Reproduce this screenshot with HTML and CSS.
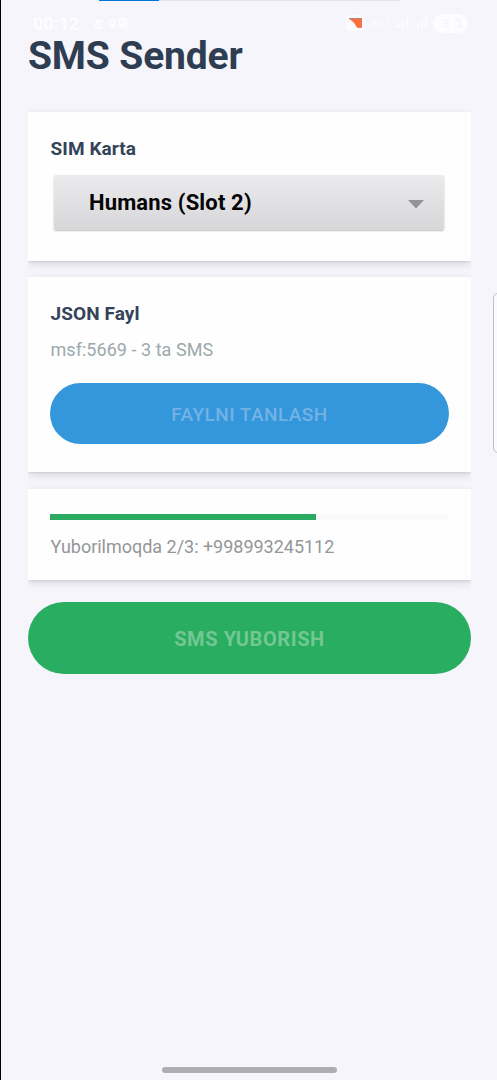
FILE: index.html
```html
<!DOCTYPE html>
<html lang="uz">
<head>
<meta charset="utf-8">
<title>SMS Sender</title>
<link rel="stylesheet" href="styles.css">
</head>
<body>
<div class="screen">
  <div class="load"><span class="load-fill"></span></div>
  <header class="status">
    <span class="clock">00:12</span>
    <svg class="notices" width="38" height="16" viewBox="0 0 38 16" fill="none" stroke="#fdfdff" stroke-width="1.8"><path d="M4 5h8M3 12l4-6 4 6M5 12h6M19 4h5v5h-5zM19 13l5-4M28 3h5v6h-5zM28 13l5-3M35.500 2v12"/></svg>
    <svg class="signals" width="124" height="20" viewBox="0 0 124 20">
      <rect x="0" y="1" width="18" height="16" rx="4" fill="#fcfbfe"/>
      <path d="M2.500 4.500h13.500v8q0 1.500-1.500 1.500h-2q-1.500 0-2.500-2-2.500-5-7.500-7.500z" fill="#f8713f"/>
      <path d="M3 4.500h13" stroke="#b08478" stroke-width="1"/>
      <path d="M26 6v7M30 6v7M26 9h4M34 6h5M34 6v6h5M42 5v4" stroke="#fcfcff" stroke-width="1.500" fill="none"/>
      <path d="M49 14v-2M53 14v-5M57 14V6M61 14V3M68 14v-2M72 14v-5M76 14V6M80 14V3" stroke="#fcfcff" stroke-width="2.500"/>
      <rect x="87" y="0" width="35" height="19" rx="9.500" fill="#fdfdff"/>
      <path d="M97 6h6M97 9.500h5M97 13h6M108 6h6v7h-6" stroke="#f6f6fc" stroke-width="1.500" fill="none"/>
    </svg>
  </header>
  <main class="content">
    <h1 class="title">SMS Sender</h1>
    <section class="card card-sim">
      <h2 class="label">SIM Karta</h2>
      <div class="select"><span class="select-text">Humans (Slot 2)</span>
        <svg class="select-arrow" width="16" height="9" viewBox="0 0 16 9"><path d="M0 0h16L8 8.500z" fill="#939297"/></svg>
      </div>
    </section>
    <section class="card card-file">
      <h2 class="label">JSON Fayl</h2>
      <p class="file-info">msf:5669 - 3 ta SMS</p>
      <button class="btn btn-file"><span>FAYLNI TANLASH</span></button>
    </section>
    <section class="card card-progress">
      <div class="track"><div class="track-fill"></div></div>
      <p class="progress-text">Yuborilmoqda 2/3: +998993245112</p>
    </section>
    <button class="btn btn-send"><span>SMS YUBORISH</span></button>
  </main>
  <div class="home-bar"></div>
  <div class="edge-handle"></div>
</div>
</body>
</html>
```
FILE: styles.css
```css
* { box-sizing: border-box; }
body { margin: 0; font-family: Roboto, "Liberation Sans", sans-serif; }
h1, h2, p { margin: 0; font-weight: 400; white-space: nowrap; }
.screen {
  position: relative;
  display: flex;
  flex-direction: column;
  width: 497px;
  height: 1080px;
  overflow: hidden;
  border-left: 1px solid #000;
  background: #f5f5fb;
}
.load { height: 1px; margin: 0 97px 0 98px; background: #e4e4e8; }
.load-fill { display: block; width: 60px; height: 1px; background: #0078d7; }
.status {
  display: flex;
  align-items: center;
  height: 31px;
  padding: 14px 27px 0 32px;
  color: #fdfdff;
}
.clock { width: 58px; font-size: 18px; font-weight: 700; }
.signals { margin-left: auto; }
.content { display: flex; flex-direction: column; flex: 1; padding: 0 26px 0 27px; }
.title {
  height: 80px;
  font-size: 39px;
  line-height: 48px;
  font-weight: 700;
  letter-spacing: -0.15px;
  color: #2e3d52;
}
.card {
  padding: 0 22px;
  background: #fefefe;
  box-shadow: 0 3px 8px rgba(40, 40, 60, .14), 0 1px 2px rgba(40, 40, 60, .1);
  clip-path: inset(-5px 0 -12px 0);
}
.card-sim { height: 149px; padding-top: 26px; margin-bottom: 16px; }
.card-file { height: 195px; padding-top: 26px; margin-bottom: 17px; }
.card-progress { height: 91px; padding-top: 25px; margin-bottom: 22px; }
.label { padding-left: 0.5px; font-size: 19px; line-height: 22px; font-weight: 700; letter-spacing: 0.08px; color: #34435a; }
.select {
  display: flex;
  align-items: center;
  justify-content: space-between;
  height: 55px;
  margin: 15px 5px 0 4px;
  padding: 0 20px 0 35px;
  border-radius: 2px;
  background: linear-gradient(#ebebed, #d7d6d9);
  box-shadow: 0 1px 2px rgba(0, 0, 0, .25);
}
.select-text { font-size: 22px; font-weight: 700; letter-spacing: 0.15px; color: #050505; }
.select-arrow { margin-top: 3px; }
.file-info { margin-top: 14px; padding-left: 0.5px; font-size: 18px; line-height: 22px; letter-spacing: 0.04px; color: #9da8aa; }
.btn {
  display: flex;
  align-items: center;
  justify-content: center;
  padding: 2px 0 0;
  border: 0;
  border-radius: 36px;
  font-family: inherit;
  font-weight: 700;
}
.btn-file { width: 399px; height: 61px; margin-top: 22px; background: #3497dc; color: #73b2e4; font-size: 19px; font-weight: 500; letter-spacing: 0.45px; }
.btn-send { width: 443px; height: 72px; flex: none; background: #28ad61; color: #73c793; font-size: 20px; letter-spacing: 0.6px; }
.track { width: 398px; height: 6px; background: #fafafc; }
.track-fill { width: 66.8%; height: 6px; background: #2bab62; }
.progress-text { margin-top: 16px; padding-left: 0.5px; font-size: 18px; line-height: 22px; letter-spacing: -0.02px; color: #949699; }
.home-bar { width: 175px; height: 6px; margin: 0 auto 7px 161px; border-radius: 3px; background: #adadb2; }
.edge-handle {
  position: absolute;
  right: -8px;
  top: 293px;
  width: 12px;
  height: 160px;
  border: 1px solid #bdbdc2;
  border-radius: 5px;
  background: #fafafd;
}
```
